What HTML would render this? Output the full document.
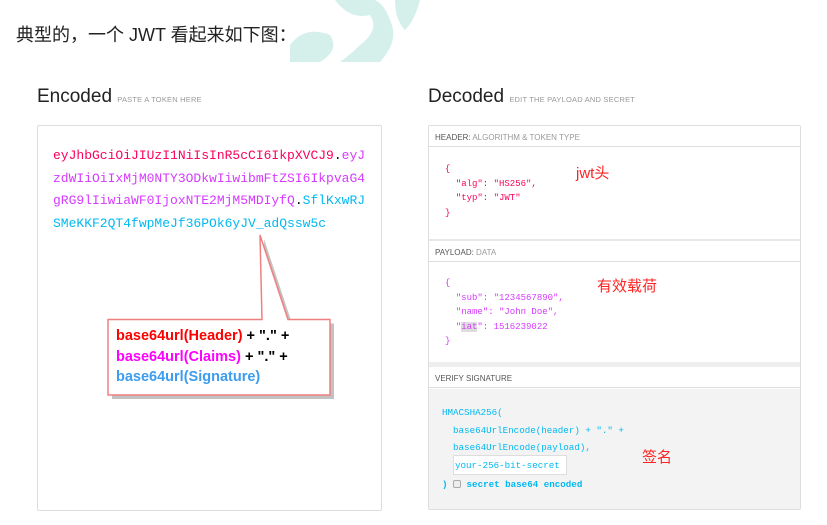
<!DOCTYPE html>
<html><head><meta charset="utf-8"><style>
*{margin:0;padding:0;box-sizing:border-box}
body{width:827px;height:525px;background:#fff;position:relative;overflow:hidden;font-family:"Liberation Sans","Noto Sans CJK SC",sans-serif}
.a{position:absolute}
.mono{font-family:"Liberation Mono","DejaVu Sans Mono",monospace}
.sub{font-size:7.5px;color:#999;letter-spacing:.2px}
.bar{position:absolute;left:0;right:0;height:21px;border-bottom:1px solid #ddd;background:#fff;font-size:8px;color:#999;padding:7px 6px 0}
.bar b{color:#555;font-weight:normal}
.code{font-size:9px;line-height:14.6px}
</style></head><body>
<svg class="a" style="left:280px;top:0" width="150" height="65">
<path d="M10 45 Q25 25 50 35 Q60 50 40 62 L10 62Z" fill="#d5f0ea"/>
<path d="M55 0 Q70 20 90 15 Q100 30 80 45 Q70 55 60 62 L100 62 Q120 40 110 20 Q105 5 95 0Z" fill="#d5f0ea"/>
<path d="M115 0 L140 0 Q135 20 125 30 Q115 20 115 0Z" fill="#d5f0ea"/>
</svg>
<div class="a" style="left:16px;top:21px;font-size:18px;color:#222">典型的，一个 JWT 看起来如下图：</div>
<div class="a" style="left:37px;top:86px;font-size:19px;color:#222">Encoded <span class="sub">PASTE A TOKEN HERE</span></div>
<div class="a" style="left:428px;top:86px;font-size:19px;color:#222">Decoded <span class="sub">EDIT THE PAYLOAD AND SECRET</span></div>
<div class="a" style="left:37px;top:125px;width:345px;height:386px;border:1px solid #ddd;border-radius:2px"></div>
<div class="a mono" style="left:53px;top:145px;font-size:13px;line-height:22.5px;white-space:pre"><span style="color:#fb015b">eyJhbGciOiJIUzI1NiIsInR5cCI6IkpXVCJ9</span>.<span style="color:#d63aff">eyJ
zdWIiOiIxMjM0NTY3ODkwIiwibmFtZSI6IkpvaG4
gRG9lIiwiaWF0IjoxNTE2MjM5MDIyfQ</span>.<span style="color:#00b9f1">SflKxwRJ
SMeKKF2QT4fwpMeJf36POk6yJV_adQssw5c</span></div>
<svg class="a" style="left:100px;top:230px" width="240" height="175">
<path d="M8 89.5 L162 89.5 L160 5 L188 89.5 L230 89.5 L230 165 L8 165Z" fill="#999" opacity=".6" transform="translate(4,4)"/>
<path d="M8 89.5 L162 89.5 L160 5 L188 89.5 L230 89.5 L230 165 L8 165Z" fill="#fff" stroke="#f08080" stroke-width="1.5"/>
</svg>
<div class="a" style="left:116px;top:326px;font-size:14.5px;font-weight:bold;line-height:20.5px;color:#000">
<div><span style="color:#f00">base64url(Header)</span> + "." +</div>
<div><span style="color:#f0f">base64url(Claims)</span> + "." +</div>
<div><span style="color:#3b9cf0">base64url(Signature)</span></div></div>
<div class="a" style="left:428px;top:125px;width:373px;height:385px;border:1px solid #ddd;border-radius:2px;overflow:hidden">
<div class="bar" style="top:0"><b>HEADER:</b> ALGORITHM &amp; TOKEN TYPE</div>
<div class="a mono code" style="left:16px;top:36px;color:#fb015b;white-space:pre">{
  "alg": "HS256",
  "typ": "JWT"
}</div>
<div class="a" style="left:0;right:0;top:113px;height:2px;background:#e8e8e8"></div>
<div class="bar" style="top:115px;border-top:0"><b>PAYLOAD:</b> DATA</div>
<div class="a mono code" style="left:16px;top:150px;color:#d63aff;white-space:pre">{
  "sub": "1234567890",
  "name": "John Doe",
  "<span style="background:#ddd">iat</span>": 1516239022
}</div>
<div class="a" style="left:0;right:0;top:236px;height:6px;background:#eee"></div>
<div class="bar" style="top:241px"><b>VERIFY SIGNATURE</b></div>
<div class="a" style="left:0;right:0;top:263px;bottom:0;background:#f3f3f3"></div>
<div class="a mono" style="left:13px;top:278px;font-size:9.2px;line-height:17.5px;color:#00b9f1;white-space:pre">HMACSHA256(
  base64UrlEncode(header) + "." +
  base64UrlEncode(payload),
</div>
<div class="a mono" style="left:24px;top:329px;width:114px;height:20px;background:#fff;border:1px solid #ddd;font-size:9.2px;color:#00b9f1;padding:4px 1px">your-256-bit-secret</div>
<div class="a mono" style="left:13px;top:353px;font-size:9.2px;color:#00b9f1;font-weight:bold">) <span style="display:inline-block;width:8px;height:8px;border:1px solid #aaa;background:#eee;border-radius:2px;vertical-align:-1px"></span> secret base64 encoded</div>
</div>
<div class="a" style="left:576px;top:162px;font-size:15px;color:#f22">jwt头</div>
<div class="a" style="left:597px;top:275px;font-size:15px;color:#f22">有效载荷</div>
<div class="a" style="left:642px;top:446px;font-size:15px;color:#f22">签名</div>
</body></html>
